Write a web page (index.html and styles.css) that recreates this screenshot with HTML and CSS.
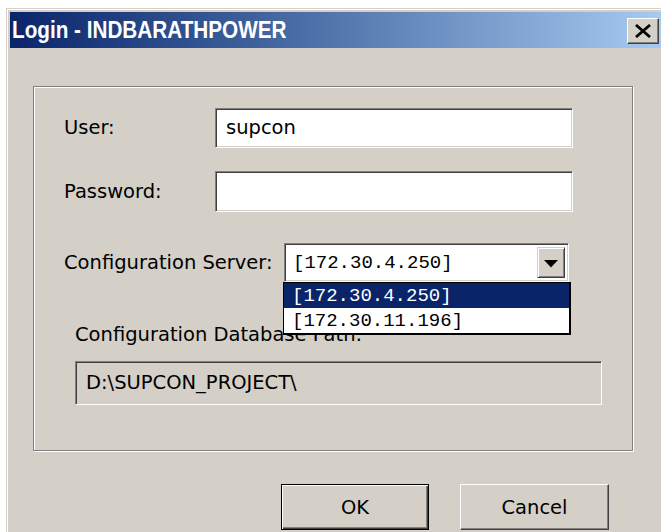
FILE: index.html
```html
<!DOCTYPE html>
<html lang="en">
<head>
<meta charset="utf-8">
<title>Login</title>
<link rel="stylesheet" href="styles.css">
</head>
<body>
<div class="window">
  <div class="titlebar">
    <span class="title">Login - INDBARATHPOWER</span>
    <div class="close">
      <svg width="18" height="14" viewBox="0 0 18 14"><path d="M2 1 L16 13 M16 1 L2 13" stroke="#000" stroke-width="2.8" fill="none"/></svg>
    </div>
  </div>
  <div class="content">
    <div class="group">
      <div class="row row-user">
        <span class="label label-short">User:</span>
        <div class="field field-wide"><span class="field-text">supcon</span></div>
      </div>
      <div class="row row-pass">
        <span class="label label-short">Password:</span>
        <div class="field field-wide field-pass"></div>
      </div>
      <div class="row row-server">
        <span class="label label-long">Configuration Server:</span>
        <div class="combo">
          <span class="combo-text">[172.30.4.250]</span>
          <div class="combo-btn">
            <svg width="14" height="8" viewBox="0 0 14 8"><polygon points="0,0 14,0 7,7.5" fill="#000"/></svg>
          </div>
          <div class="droplist">
            <div class="drop-item drop-item-selected">[172.30.4.250]</div>
            <div class="drop-item">[172.30.11.196]</div>
          </div>
        </div>
      </div>
      <div class="dbpath">
        <div class="dbpath-label">Configuration Database Path:</div>
        <div class="field field-disabled"><span class="field-text">D:\SUPCON_PROJECT\</span></div>
      </div>
    </div>
    <div class="buttons">
      <div class="btn btn-default"><span class="btn-face">OK</span></div>
      <div class="btn"><span class="btn-face">Cancel</span></div>
    </div>
  </div>
</div>
</body>
</html>
```

FILE: styles.css
```css
html, body {
  margin: 0;
  padding: 0;
}

body {
  width: 661px;
  height: 532px;
  overflow: hidden;
  background: #ffffff;
  font-family: "DejaVu Sans", sans-serif;
  font-size: 19.5px;
  color: #000;
}

/* dialog frame */
.window {
  margin: 8px 0 0 6px;
  width: 658px;
  height: 540px;
  box-sizing: border-box;
  background: #d4d0c8;
  border-top: 1px solid #d4d0c8;
  border-left: 1px solid #d4d0c8;
  box-shadow: inset 1px 1px 0 #ffffff;
  padding: 3px 3px 0 3px;
}

.titlebar {
  height: 36px;
  display: flex;
  align-items: center;
  justify-content: space-between;
  padding: 0 2px 0 2px;
  background: linear-gradient(to right, #0a246a 0%, #3a5d99 35%, #a6caf0 100%);
}

/* narrow bold caption */
.title {
  display: inline-block;
  font-family: "Liberation Sans", Arial, sans-serif;
  font-weight: bold;
  font-size: 23px;
  color: #ffffff;
  line-height: 1;
  transform: scaleX(0.9);
  transform-origin: left center;
  white-space: nowrap;
}

.close {
  width: 32px;
  height: 26px;
  box-sizing: border-box;
  margin-top: 2px;
  background: #d4d0c8;
  border: 1px solid;
  border-color: #ffffff #404040 #404040 #ffffff;
  box-shadow: inset -1px -1px 0 #808080;
  display: flex;
  align-items: center;
  justify-content: center;
}

.content {
  padding: 38px 0 0 23px;
}

/* etched group frame */
.group {
  width: 600px;
  height: 365px;
  box-sizing: border-box;
  border: 1px solid #808080;
  box-shadow: inset 1px 1px 0 #ffffff, 1px 1px 0 #ffffff;
  padding: 21px 0 0 30px;
}

.row {
  display: flex;
  align-items: center;
}

.row-user {
  height: 40px;
  margin-bottom: 23px;
}

.row-pass {
  height: 41px;
  margin-bottom: 31px;
}

.row-server {
  height: 39px;
}

.label {
  line-height: 22px;
  white-space: nowrap;
}

.label-short {
  width: 151px;
}

.label-long {
  width: 220px;
}

/* sunken edit box */
.field {
  box-sizing: border-box;
  background: #ffffff;
  border: 1px solid;
  border-color: #808080 #ffffff #ffffff #808080;
  box-shadow: inset 1px 1px 0 #404040, inset -1px -1px 0 #d4d0c8;
  display: flex;
  align-items: center;
  padding-left: 10px;
}

.field-wide {
  width: 358px;
  height: 40px;
}

.field-pass {
  height: 41px;
}

.field-text {
  line-height: 22px;
  white-space: nowrap;
}

/* combo box */
.combo {
  position: relative;
  width: 285px;
  height: 39px;
  box-sizing: border-box;
  background: #ffffff;
  border: 1px solid;
  border-color: #808080 #ffffff #ffffff #808080;
  box-shadow: inset 1px 1px 0 #404040, inset -1px -1px 0 #d4d0c8;
  padding: 3px 3px 3px 8px;
  display: flex;
  align-items: center;
  justify-content: space-between;
}

.combo-text,
.drop-item {
  font-family: "Liberation Mono", "Courier New", monospace;
  font-size: 19px;
  line-height: 22px;
  white-space: nowrap;
}

.combo-btn {
  width: 28px;
  height: 31px;
  box-sizing: border-box;
  background: #d4d0c8;
  border: 1px solid;
  border-color: #d4d0c8 #404040 #404040 #d4d0c8;
  box-shadow: inset 1px 1px 0 #ffffff, inset -1px -1px 0 #808080;
  display: flex;
  align-items: center;
  justify-content: center;
  padding-top: 3px;
}

/* open drop-down list over the form */
.droplist {
  position: absolute;
  top: 38px;
  left: -2px;
  width: 288px;
  box-sizing: border-box;
  background: #ffffff;
  border: 1px solid #000000;
  border-right-width: 2px;
  border-bottom-width: 2px;
  z-index: 2;
}

.drop-item {
  height: 25px;
  padding-left: 8px;
  display: flex;
  align-items: center;
}

.drop-item-selected {
  background: #0a246a;
  color: #ffffff;
}

/* database path block */
.dbpath {
  margin-top: 42px;
  padding-left: 11px;
}

.dbpath-label {
  line-height: 22px;
  white-space: nowrap;
  margin-bottom: 15px;
}

.field-disabled {
  width: 527px;
  height: 44px;
  background: #d4d0c8;
}

/* dialog buttons */
.buttons {
  display: flex;
  justify-content: flex-end;
  gap: 31px;
  margin-top: 33px;
  padding-right: 52px;
}

.btn {
  width: 149px;
  height: 46px;
  box-sizing: border-box;
  background: #d4d0c8;
  border: 1px solid;
  border-color: #ffffff #404040 #404040 #ffffff;
  box-shadow: inset -1px -1px 0 #808080;
  display: flex;
  align-items: center;
  justify-content: center;
}

.btn-default {
  width: 148px;
  border: 1px solid #000000;
  box-shadow: inset 1px 1px 0 #ffffff, inset -1px -1px 0 #404040, inset -2px -2px 0 #808080;
}

.btn-face {
  line-height: 22px;
  padding-top: 2px;
}
```
